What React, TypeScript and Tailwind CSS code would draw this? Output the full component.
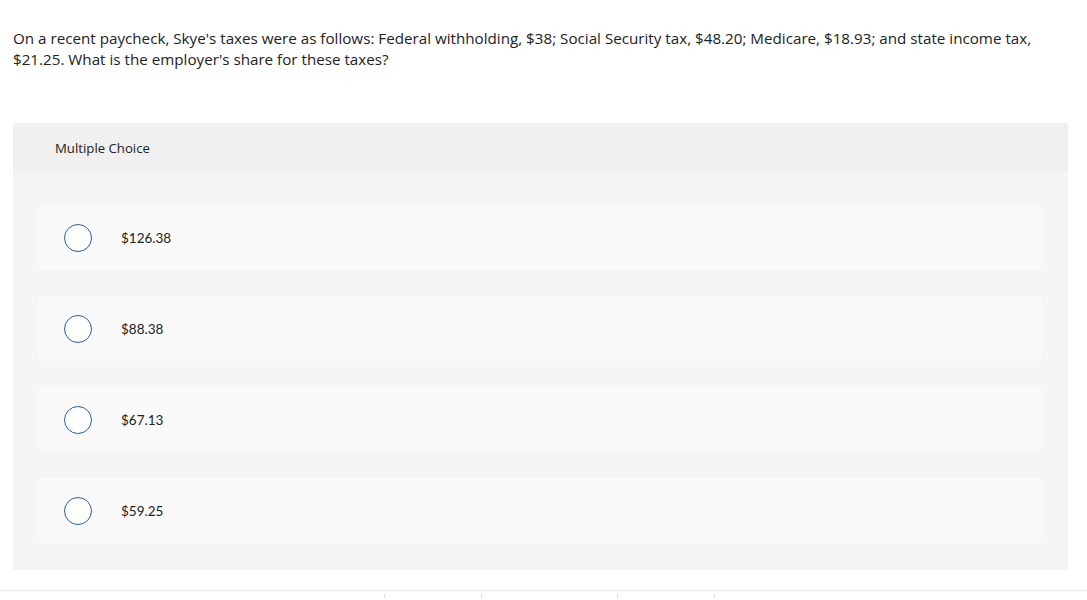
import React from "react";

const options = ["$126.38", "$88.38", "$67.13", "$59.25"];

export default function App() {
  return (
    <div className="w-[1087px] h-[600px] bg-white text-[#1a1a1a] overflow-hidden flex flex-col" style={{ fontFamily: "Lato, 'Open Sans', sans-serif" }}>
      <div className="pt-[28px] px-[13px]">
        <p className="text-[15.2px] leading-[21px] w-[1040px] text-[#222]" style={{ fontFamily: "'Open Sans', sans-serif" }}>
          On a recent paycheck, Skye's taxes were as follows: Federal withholding, $38; Social Security tax, $48.20; Medicare, $18.93; and state income tax, $21.25. What is the employer's share for these taxes?
        </p>
      </div>
      <div className="mt-[53px] mx-[13px] w-[1055px] bg-[#f5f5f5] rounded-t-[3px]">
        <div className="h-[50px] bg-[#f0f0f0] rounded-t-[3px] flex items-center pl-[42px] pt-[1px] text-[13.2px] text-[#222]" style={{ fontFamily: "'Open Sans', sans-serif" }}>
          Multiple Choice
        </div>
        <div className="pt-[32px] pb-[27px] pl-[26px] pr-[27px] flex flex-col gap-[26px]">
          {options.map((o) => (
            <div key={o} className="h-[65px] bg-[#fafafa] rounded-[3px] flex items-center">
              <div className="ml-[25px] w-[28px] h-[28px] rounded-full border-[1.5px] border-[#2a5f93] bg-white" />
              <span className="ml-[29px] pt-[1px] text-[13.5px] text-[#222]">{o}</span>
            </div>
          ))}
        </div>
      </div>
      <div className="mt-[20px] border-t border-[#ebebeb] h-[10px] flex items-start pt-[3px] pl-[384px]">
        <div className="w-px h-[4px] bg-[#ddd]" />
        <div className="ml-[96px] w-px h-[4px] bg-[#ddd]" />
        <div className="ml-[135px] w-px h-[4px] bg-[#ddd]" />
        <div className="ml-[96px] w-px h-[4px] bg-[#ddd]" />
      </div>
    </div>
  );
}
